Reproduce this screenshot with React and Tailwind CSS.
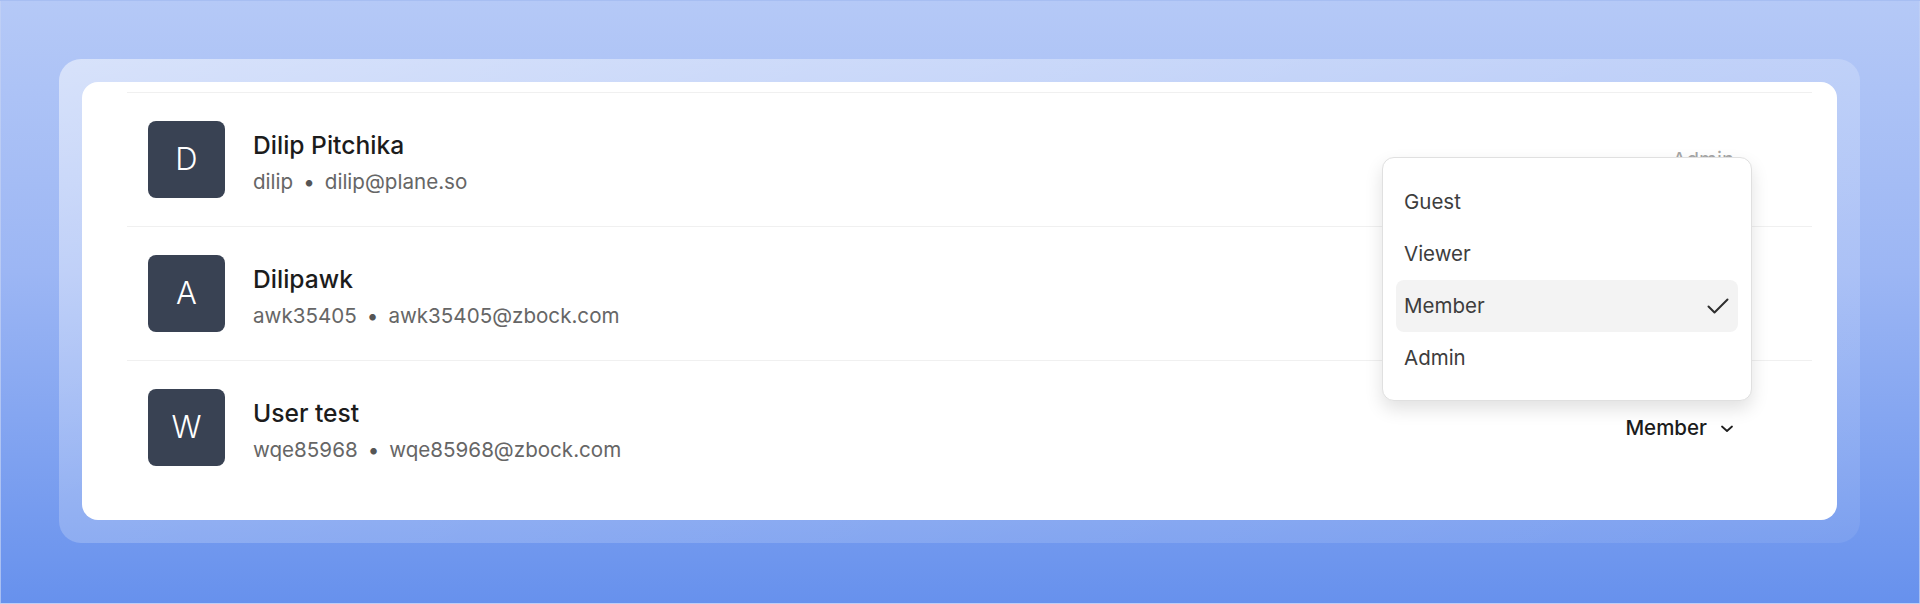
import React from "react";

const members = [
  { initial: "D", name: "Dilip Pitchika", user: "dilip", email: "dilip@plane.so", role: "Admin", disabled: true },
  { initial: "A", name: "Dilipawk", user: "awk35405", email: "awk35405@zbock.com", role: "Member", hidden: true },
  { initial: "W", name: "User test", user: "wqe85968", email: "wqe85968@zbock.com", role: "Member" },
];

function Chevron() {
  return (
    <svg width="14" height="8" viewBox="0 0 14 8" fill="none" className="mt-[2px]">
      <path d="M2 1.5 L7 6 L12 1.5" stroke="#1f1f1f" strokeWidth="1.8" strokeLinecap="round" strokeLinejoin="round" />
    </svg>
  );
}

function Check() {
  return (
    <svg width="22" height="16" viewBox="0 0 22 16" fill="none">
      <path d="M1.5 8.5 L7.5 14.5 L20.5 1.5" stroke="#2e2e2e" strokeWidth="2" strokeLinecap="round" strokeLinejoin="round" />
    </svg>
  );
}

function Row({ m }) {
  return (
    <div className="flex items-center h-[134px] border-t border-[#f0f0f0] pl-[21px] pr-[78px]">
      <div className="w-[77px] h-[77px] shrink-0 rounded-[8px] bg-[#394253] flex items-center justify-center text-white text-[31px] font-light">
        {m.initial}
      </div>
      <div className="ml-[28px] pt-[7px] flex flex-col">
        <div className="text-[24.6px] leading-[30px] font-medium text-[#1c1c1c]">{m.name}</div>
        <div className="mt-[8px] flex items-center gap-[10px] text-[20.6px] leading-[28px] text-[#666666]">
          <span>{m.user}</span>
          <span className="text-[#555555]">•</span>
          <span>{m.email}</span>
        </div>
      </div>
      <div className="ml-auto flex items-center">
        {m.disabled ? (
          <span className="text-[20.5px] leading-[28px] text-[#a6a6a6]">{m.role}</span>
        ) : m.hidden ? null : (
          <div className="flex items-center gap-[13px] text-[20.5px] leading-[28px] font-medium text-[#1c1c1c] mt-[1px]">
            <span>{m.role}</span>
            <Chevron />
          </div>
        )}
      </div>
    </div>
  );
}

const options = ["Guest", "Viewer", "Member", "Admin"];

export default function App() {
  return (
    <div className="w-[1920px] h-[604px] overflow-hidden border border-[#c3d2f4]/70 bg-[linear-gradient(180deg,#b5c9f7_0%,#9cb6f4_45%,#6791ed_100%)] pt-[58px] pl-[58px] font-['Inter',sans-serif]">
      <div className="w-[1801px] h-[484px] rounded-[22px] p-[23px] bg-[linear-gradient(to_bottom_right,rgba(255,255,255,0.5),rgba(255,255,255,0.22)_45%,rgba(255,255,255,0.08))]">
        <div className="relative h-full rounded-[16px] bg-white pt-[10px] pl-[45px] pr-[25px]">
          {members.map((m) => (
            <Row key={m.email} m={m} />
          ))}
          <div className="absolute left-[1300px] top-[75px] w-[370px] h-[244px] rounded-[12px] border border-[#e0e0e0] bg-white px-[13px] pt-[18px] pb-[16px] shadow-[0_8px_18px_rgba(0,0,0,0.12)]">
            {options.map((o) => (
              <div
                key={o}
                className={
                  o === "Member"
                    ? "flex items-center justify-between h-[52px] rounded-[8px] bg-[#f3f3f3] pl-[8px] pr-[9px] text-[20.5px] text-[#3d3d3d]"
                    : "flex items-center justify-between h-[52px] rounded-[8px] pl-[8px] pr-[9px] text-[20.5px] text-[#3d3d3d]"
                }
              >
                <span>{o}</span>
                {o === "Member" ? <Check /> : null}
              </div>
            ))}
          </div>
        </div>
      </div>
    </div>
  );
}
